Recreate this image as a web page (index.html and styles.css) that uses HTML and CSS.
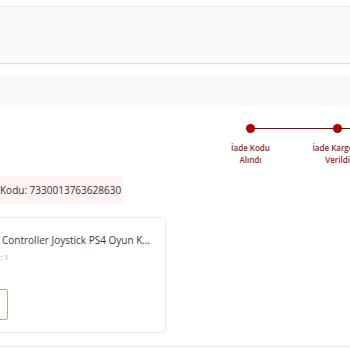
FILE: index.html
```html
<!DOCTYPE html>
<html lang="tr">
<head>
	<meta charset="utf-8" />
	<title>İade Detayı</title>
	<link rel="stylesheet" href="styles.css">
</head>
<body>
<div class="header"></div>
<div class="band"></div>

<div class="steps">
	<div class="step done">
		<span class="dot"></span>
		<p>İade Kodu<br />Alındı</p>
	</div>
	<div class="step done">
		<span class="dot"></span>
		<p>İade Kargoya<br />Verildi</p>
	</div>
</div>

<div class="code">Kodu: 7330013763628630</div>

<div class="card">
	<p class="name">Controller Joystick PS4 Oyun Kolu Siyah</p>
	<p class="qty">Adet: 1</p>
	<div class="btn"></div>
</div>

<div class="footer"></div>
</body>
</html>
```

FILE: styles.css
```css
body {
	margin: 0;
	background-color: #fff;
	font-family: "Open Sans", "Noto Sans", sans-serif;
	overflow: hidden;
	width: 350px;
	height: 350px;
}
.header {
	margin-top: 6px;
	height: 56px;
	background-color: #fafafa;
	border-top: 1px solid #ebebeb;
	border-bottom: 1px solid #e2e2e2;
	box-shadow: 0 1px 2px rgba(0, 0, 0, 0.04);
}
.band {
	margin-top: 12px;
	height: 31px;
	background-color: #f9f9f9;
}
.steps {
	display: flex;
	padding-left: 207px;
	padding-top: 17px;
	width: 400px;
}
.step {
	width: 87px;
	flex-shrink: 0;
	display: flex;
	flex-direction: column;
	align-items: center;
	position: relative;
}
.step::after {
	content: "";
	position: absolute;
	top: 4px;
	left: 50%;
	width: 87px;
	height: 1px;
	background-color: #7d0a0a;
}
.dot {
	width: 9px;
	height: 9px;
	border-radius: 50%;
	background-color: #b30000;
	position: relative;
	z-index: 1;
}
.dot + p {
	margin: 9px 0 0;
	font-size: 8px;
	line-height: 12px;
	font-weight: 600;
	color: #8f1f1f;
	text-align: center;
	white-space: nowrap;
}
.code {
	margin-top: 10px;
	width: 123px;
	height: 28px;
	line-height: 28px;
	background-color: #fdf3f2;
	font-size: 10px;
	color: #333;
	white-space: nowrap;
	border-radius: 0 2px 2px 0;
}
.card {
	margin-top: 13px;
	margin-left: -20px;
	width: 186px;
	height: 116px;
	border: 1px solid #ececec;
	border-radius: 5px;
	box-shadow: 0 1px 3px rgba(0, 0, 0, 0.06);
	padding-top: 14px;
	box-sizing: border-box;
	padding-left: 21px;
}
.name {
	margin: 0;
	width: 152px;
	font-size: 10px;
	line-height: 16px;
	color: #3a3a3a;
	white-space: nowrap;
	overflow: hidden;
	text-overflow: ellipsis;
}
.qty {
	margin: 3px 0 0 -18px;
	font-size: 7.5px;
	line-height: 12px;
	color: #aaa;
}
.btn {
	margin: 26px 0 0 -30px;
	width: 34px;
	height: 29px;
	border: 1px solid #c9a27c;
	border-radius: 2px;
}
.footer {
	margin-top: 13px;
	border-top: 1px solid #ececec;
}
```
